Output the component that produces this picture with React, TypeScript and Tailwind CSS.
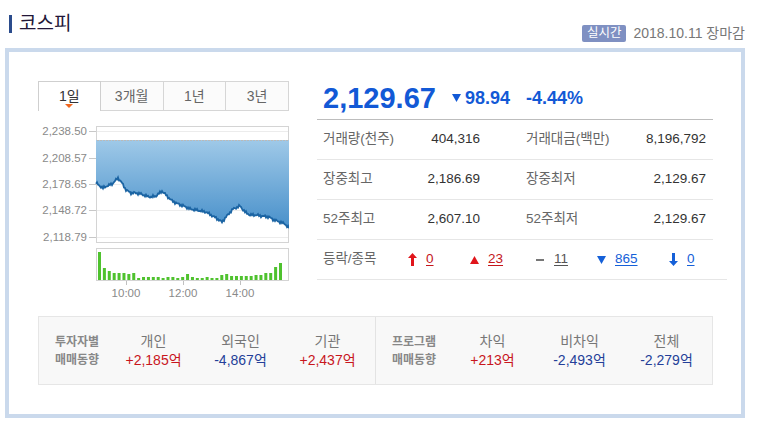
import React from 'react'

const FONT = "font-['Liberation_Sans','Noto_Sans_CJK_KR',sans-serif]"

// key points of the intraday line, in page coordinates
const KEY: [number, number][] = [
  [96, 183], [100, 186], [103, 188], [107, 186], [112, 184], [118, 178], [122, 183],
  [126, 190], [131, 193], [136, 193], [141, 194], [146, 196], [151, 197], [156, 196],
  [162, 191], [166, 195], [171, 200], [176, 203], [181, 205], [186, 207], [190, 209],
  [196, 210], [201, 211], [206, 212], [211, 215], [216, 218], [222, 222], [226, 217],
  [233, 209], [240, 206], [245, 212], [250, 215], [256, 215], [262, 216], [269, 217],
  [274, 220], [280, 222], [285, 224], [289, 228],
]

function linePoints() {
  const pts: [number, number][] = []
  let k = 0
  for (let x = 96; x <= 289; x += 1) {
    while (k < KEY.length - 2 && KEY[k + 1][0] < x) k++
    const [x0, y0] = KEY[k]
    const [x1, y1] = KEY[k + 1]
    const t = Math.min(1, Math.max(0, (x - x0) / (x1 - x0)))
    const noise = Math.sin(x * 2.7) * 0.9 + Math.sin(x * 7.3) * 0.6
    pts.push([x, y0 + (y1 - y0) * t + noise])
  }
  return pts
}

const VOL = [
  28, 12, 9, 7, 7, 7, 6, 7, 2, 3, 3, 3, 3, 2, 3, 3, 2, 3, 6, 3, 2, 2, 3, 2, 2, 5, 6, 4, 4, 4,
  4, 4, 5, 5, 7, 7, 13, 17,
]

const Y_LABELS: [string, number][] = [
  ['2,238.50', 131],
  ['2,208.57', 158],
  ['2,178.65', 184],
  ['2,148.72', 210],
  ['2,118.79', 237],
]

function Chart() {
  const pts = linePoints()
  const line = pts.map(([x, y], i) => `${i ? 'L' : 'M'}${x} ${y.toFixed(1)}`).join(' ')
  const area = `M96 140 ${pts.map(([x, y]) => `L${x} ${y.toFixed(1)}`).join(' ')} L289 140 Z`
  const pitch = (279 - 98) / (VOL.length - 1)
  return (
    <svg width="251" height="189" viewBox="38 111 251 189" className="block">
      <defs>
        <linearGradient id="fill" x1="0" y1="0" x2="0" y2="1">
          <stop offset="0" stopColor="#9fc9e8" />
          <stop offset="1" stopColor="#4890ca" />
        </linearGradient>
      </defs>
      <rect x="96.5" y="126.5" width="192" height="116" fill="#fff" stroke="#d4d4d4" />
      {Y_LABELS.map(([t, y]) => (
        <g key={t}>
          <line x1="97" x2="288" y1={y + 0.5} y2={y + 0.5} stroke="#ececec" />
          <line x1="89" x2="96" y1={y + 0.5} y2={y + 0.5} stroke="#c8c8c8" />
          <text x="87" y={y + 4} textAnchor="end" fontSize="11.5" fill="#8a8a8a" fontFamily="Liberation Sans, sans-serif">
            {t}
          </text>
        </g>
      ))}
      <path d={area} fill="url(#fill)" />
      <line x1="97" x2="288" y1="140.5" y2="140.5" stroke="#b9b9b9" strokeDasharray="2 1" />
      <path d={line} fill="none" stroke="#1b64a3" strokeWidth="1.8" />
      <rect x="96.5" y="248.5" width="192" height="32" fill="#fff" stroke="#d4d4d4" />
      {VOL.map((h, i) => (
        <rect key={i} x={98 + i * pitch} y={280 - h} width="3" height={h} fill="#4fc22e" />
      ))}
      {[126, 183, 240].map((x, i) => (
        <g key={x}>
          <line x1={x + 0.5} x2={x + 0.5} y1="281" y2="285" stroke="#c0c0c0" />
          <text x={x} y="297" textAnchor="middle" fontSize="11.5" fill="#8a8a8a" fontFamily="Liberation Sans, sans-serif">
            {['10:00', '12:00', '14:00'][i]}
          </text>
        </g>
      ))}
    </svg>
  )
}

function Tabs() {
  const tabs = ['1일', '3개월', '1년', '3년']
  return (
    <div className="flex h-[30px]">
      {tabs.map((t, i) =>
        i === 0 ? (
          <div
            key={t}
            className="relative flex w-[63px] items-center justify-center border border-b-0 border-[#cfcfcf] bg-white text-[14px] text-[#333]"
          >
            {t}
            <span className="absolute bottom-[3px] left-1/2 -ml-[4px] h-0 w-0 border-x-[4px] border-t-[4px] border-x-transparent border-t-[#f0661e]" />
          </div>
        ) : (
          <div
            key={t}
            className="flex w-[63px] items-center justify-center border-t border-r border-b border-[#d6d6d6] bg-[#fbfbfb] text-[14px] text-[#666]"
          >
            {t}
          </div>
        ),
      )}
    </div>
  )
}

function Row({ a, av, b, bv }: { a: string; av: string; b: string; bv: string }) {
  return (
    <div className="flex h-[40px] items-center border-b border-[#e6e6e6] text-[13.5px]">
      <span className="w-[100px] pl-[6px] text-[#666]">{a}</span>
      <span className="w-[63px] text-right text-[#333]">{av}</span>
      <span className="ml-[46px] w-[120px] text-[#666]">{b}</span>
      <span className="flex-1 pr-[7px] text-right text-[#333]">{bv}</span>
    </div>
  )
}

const UpArrow = ({ c }: { c: string }) => (
  <svg width="9" height="13" viewBox="0 0 9 13">
    <path d="M4.5 0 L9 5 L6 5 L6 13 L3 13 L3 5 L0 5 Z" fill={c} />
  </svg>
)
const DownArrow = ({ c }: { c: string }) => (
  <svg width="9" height="13" viewBox="0 0 9 13">
    <path d="M4.5 13 L9 8 L6 8 L6 0 L3 0 L3 8 L0 8 Z" fill={c} />
  </svg>
)
const Tri = ({ c, down }: { c: string; down?: boolean }) => (
  <svg width="9" height="8" viewBox="0 0 9 8">
    <path d={down ? 'M0 0 L9 0 L4.5 8 Z' : 'M4.5 0 L9 8 L0 8 Z'} fill={c} />
  </svg>
)

function UpDownRow() {
  const RED = '#e0151b'
  const BLUE = '#1560d8'
  const item = (icon: React.ReactNode, n: string, color: string, w: string) => (
    <span className={`flex items-center gap-[9px] ${w}`}>
      {icon}
      <span className="underline underline-offset-2" style={{ color }}>
        {n}
      </span>
    </span>
  )
  return (
    <div className="flex h-[40px] w-[410px] items-center border-b border-[#e6e6e6] text-[13.5px]">
      <span className="w-[91px] pl-[6px] text-[#666]">등락/종목</span>
      {item(<UpArrow c={RED} />, '0', '#c4161c', 'w-[62px]')}
      {item(<Tri c={RED} />, '23', '#c4161c', 'w-[65px]')}
      {item(<span className="mx-[1px] block h-[2px] w-[8px] bg-[#777]" />, '11', '#555', 'w-[62px]')}
      {item(<Tri c={BLUE} down />, '865', BLUE, 'w-[72px]')}
      {item(<DownArrow c={BLUE} />, '0', BLUE, '')}
    </div>
  )
}

function Flow({
  title,
  cols,
  pl,
  tw,
}: {
  title: [string, string]
  cols: { label: string; value: string; up: boolean }[]
  pl: string
  tw: string
}) {
  return (
    <div className={`flex h-full flex-1 items-center ${pl}`}>
      <div className={`${tw} whitespace-nowrap text-[12px] font-bold leading-[18px] text-[#888]`}>
        <div>{title[0]}</div>
        <div>{title[1]}</div>
      </div>
      {cols.map((c) => (
        <div key={c.label} className="w-[87px] whitespace-nowrap text-center leading-[19px]">
          <div className="text-[14px] text-[#777]">{c.label}</div>
          <div className={`text-[14px] ${c.up ? 'text-[#c8161d]' : 'text-[#243f99]'}`}>{c.value}</div>
        </div>
      ))}
    </div>
  )
}

export default function App() {
  return (
    <div className={`h-[429px] w-[760px] overflow-hidden bg-white ${FONT}`}>
      <header className="flex h-[48px] items-start justify-between pt-[15px] pr-[15px] pl-[9px]">
        <div className="flex items-center gap-[7px]">
          <span className="block h-[18px] w-[3px] bg-[#2b4c8c]" />
          <span className="text-[19px] leading-[18px] text-[#221637]">코스피</span>
        </div>
        <div className="mt-[8px] flex items-center gap-[7px]">
          <span className="rounded-[2px] bg-[#7f90c2] px-[5px] text-[12.5px] leading-[17px] text-white">실시간</span>
          <span className="text-[14px] text-[#777]">2018.10.11 장마감</span>
        </div>
      </header>
      <div className="ml-[5px] h-[370px] w-[740px] border-4 border-[#cad9ec] pt-[29px] pl-[29px]">
        <div className="flex gap-[28px]">
          <div className="w-[251px]">
            <Tabs />
            <Chart />
          </div>
          <div className="w-[396px]">
            <div className="flex h-[39px] items-center gap-[16px] border-b border-[#bdbdbd] pb-[4px] pl-[6px] font-bold text-[#1259d6]">
              <span className="text-[29px] leading-none">2,129.67</span>
              <span className="flex items-center gap-[4px] text-[18px] leading-none">
                <Tri c="#1259d6" down />
                98.94
              </span>
              <span className="text-[18px] leading-none">-4.44%</span>
            </div>
            <Row a="거래량(천주)" av="404,316" b="거래대금(백만)" bv="8,196,792" />
            <Row a="장중최고" av="2,186.69" b="장중최저" bv="2,129.67" />
            <Row a="52주최고" av="2,607.10" b="52주최저" bv="2,129.67" />
            <UpDownRow />
          </div>
        </div>
        <div className="mt-[16px] flex h-[69px] w-[675px] border border-[#e6e6e6] bg-[#f8f8f8]">
          <Flow
            title={['투자자별', '매매동향']}
            pl="pl-[16px]"
            tw="w-[55px]"
            cols={[
              { label: '개인', value: '+2,185억', up: true },
              { label: '외국인', value: '-4,867억', up: false },
              { label: '기관', value: '+2,437억', up: true },
            ]}
          />
          <div className="w-px bg-[#e3e3e3]" />
          <Flow
            title={['프로그램', '매매동향']}
            pl="pl-[16px]"
            tw="w-[57px]"
            cols={[
              { label: '차익', value: '+213억', up: true },
              { label: '비차익', value: '-2,493억', up: false },
              { label: '전체', value: '-2,279억', up: false },
            ]}
          />
        </div>
      </div>
    </div>
  )
}
